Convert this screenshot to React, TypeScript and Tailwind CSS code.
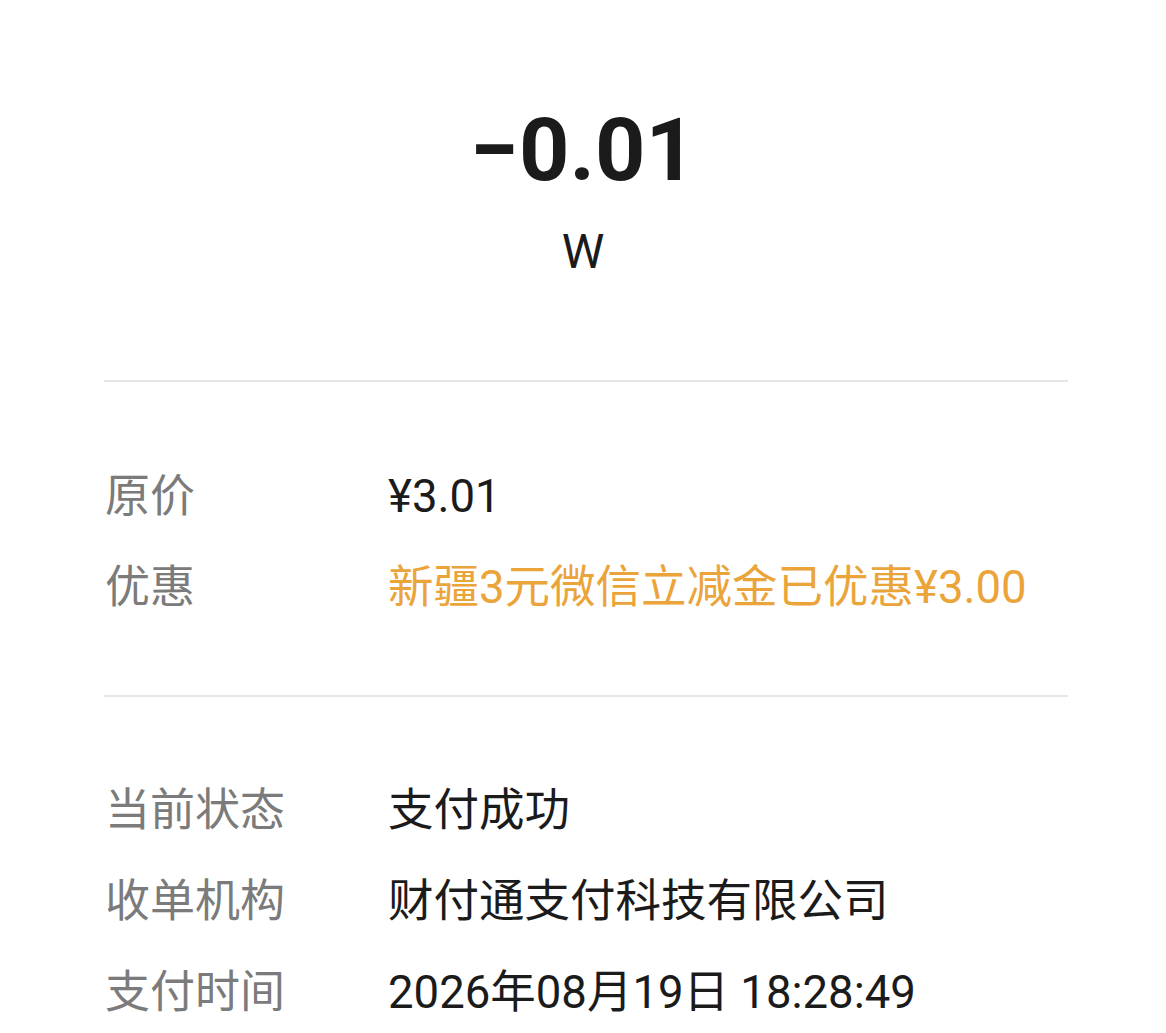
const font = { fontFamily: 'Roboto, "Noto Sans CJK SC", sans-serif' };

type Row = { label: string; value: string; accent?: boolean };

const priceRows: Row[] = [
  { label: "原价", value: "¥3.01" },
  { label: "优惠", value: "新疆3元微信立减金已优惠¥3.00", accent: true },
];

const infoRows: Row[] = [
  { label: "当前状态", value: "支付成功" },
  { label: "收单机构", value: "财付通支付科技有限公司" },
  { label: "支付时间", value: "2026年08月19日 18:28:49" },
];

function DetailRow({ label, value, accent }: Row) {
  return (
    <div className="flex h-[91px] items-center">
      <div className="w-[283px] shrink-0 text-[45px] leading-none text-[#7b7b7b]">{label}</div>
      <div
        className={
          "whitespace-nowrap text-[45.5px] leading-none " +
          (accent ? "text-[#eba43a]" : "text-[#1b1b1b]")
        }
      >
        {value}
      </div>
    </div>
  );
}

export default function App() {
  return (
    <div className="min-h-[1033px] w-full overflow-hidden bg-white" style={font}>
      <div className="flex flex-col items-center pt-[106px]">
        <div className="h-[88px] text-[88px] font-bold leading-none text-[#1b1b1b]">−0.01</div>
        <div className="mt-[34px] h-[48px] text-[48px] leading-none text-[#1b1b1b]">W</div>
      </div>

      <div className="ml-[104px] mr-[98px] mt-[104px] border-t-2 border-[#e6e6e6]" />

      <div className="px-[105px] pt-[69px] pb-[62px]">
        {priceRows.map((r) => (
          <DetailRow key={r.label} {...r} />
        ))}
      </div>

      <div className="ml-[104px] mr-[98px] border-t-2 border-[#e6e6e6]" />

      <div className="px-[105px] pt-[68px]">
        {infoRows.map((r) => (
          <DetailRow key={r.label} {...r} />
        ))}
      </div>
    </div>
  );
}
